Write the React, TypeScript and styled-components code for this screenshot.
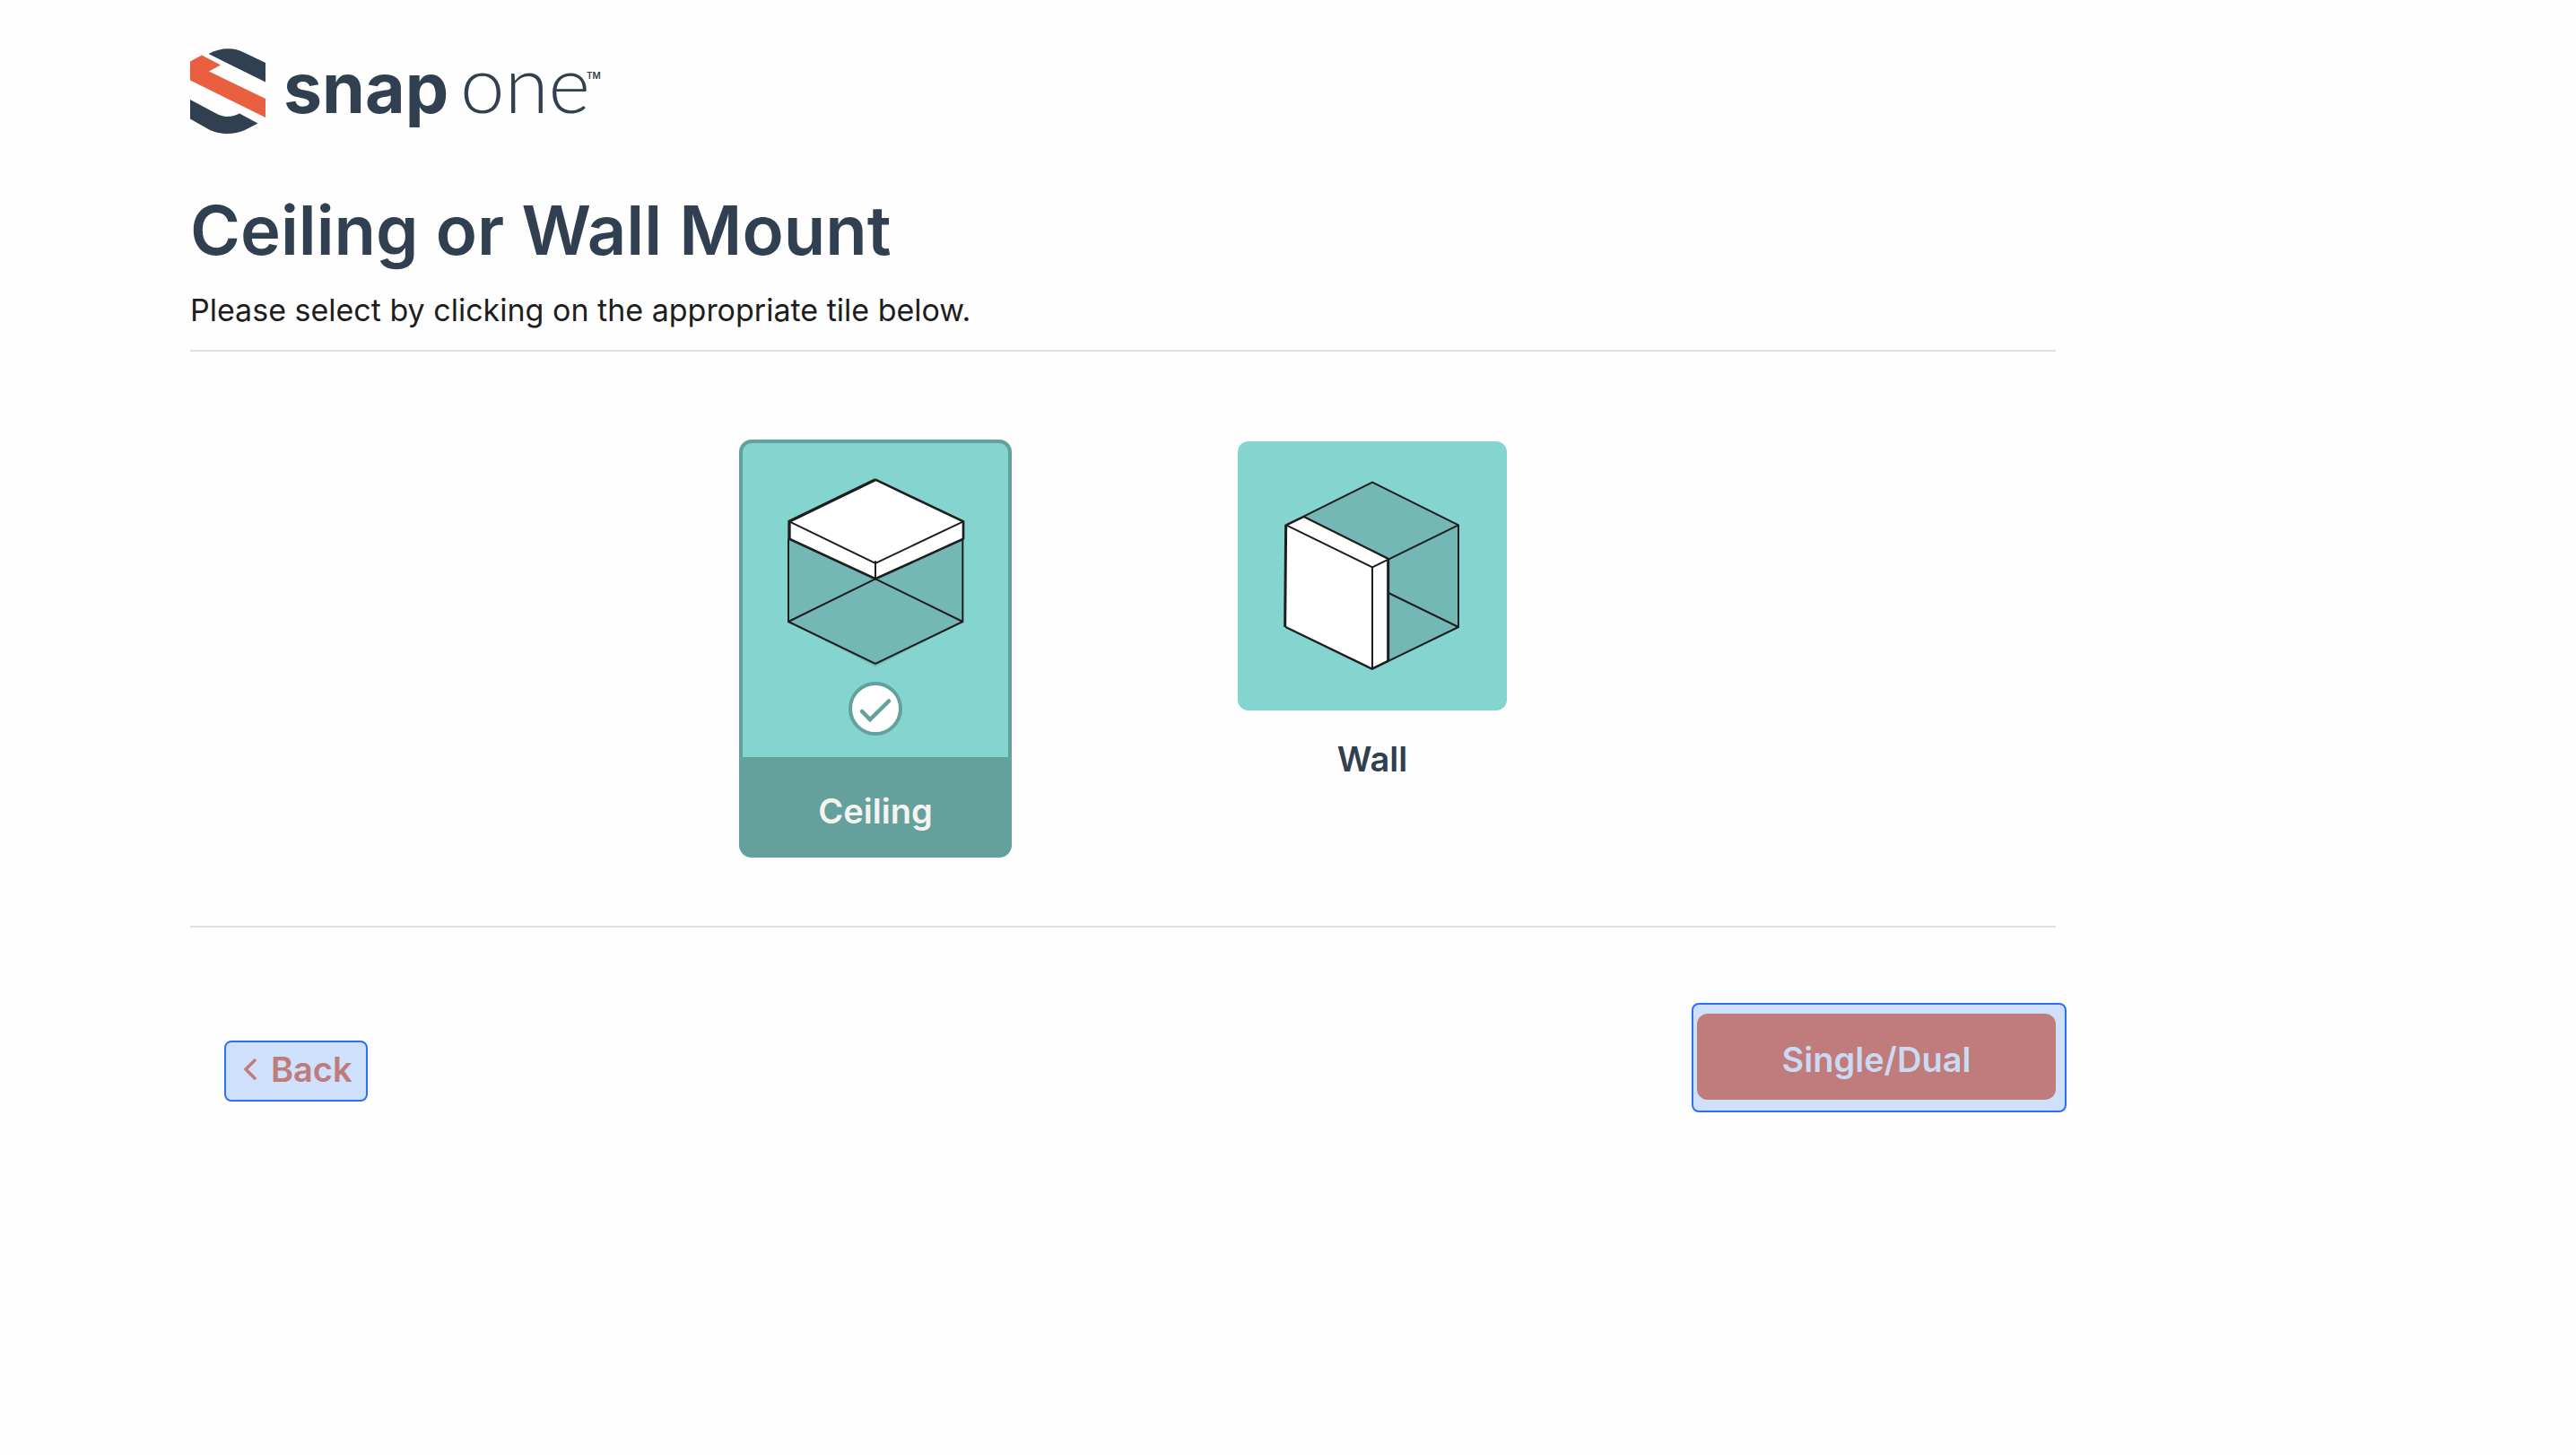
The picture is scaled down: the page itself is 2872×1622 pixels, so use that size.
import React, { useState } from "react";
import styled, { createGlobalStyle, css } from "styled-components";

const navy = "#304050";
const orange = "#e8603f";
const aqua = "#84d4cf";
const teal = "#64a19d";
const ink = "#1e1e20";
const shade = "#74b8b5";
const rose = "#c07b7b";
const highlight = "#cfe0fb";
const highlightEdge = "#2970fa";
const rule = "#dedede";

const GlobalStyle = createGlobalStyle`
  *, *::before, *::after { box-sizing: border-box; }
  body {
    margin: 0;
    background: #fefefe;
    color: ${ink};
    font-family: Inter, "Noto Sans", sans-serif;
  }
  button { font: inherit; border: 0; padding: 0; background: none; cursor: pointer; }
`;

const Page = styled.main`
  max-width: 2292px;
  padding: 54px 0 0 212px;
`;

const Logo = styled.svg`
  display: block;
  width: 460px;
  height: 96px;
  overflow: visible;
`;

const Header = styled.header`
  padding-bottom: 20px;
  border-bottom: 2px solid ${rule};
`;

const Title = styled.h1`
  margin: 64px 0 24px;
  color: ${navy};
  font-size: 76px;
  line-height: 84px;
  font-weight: 600;
`;

const Intro = styled.p`
  margin: 0;
  font-size: 34px;
  line-height: 48px;
`;

const Tiles = styled.section`
  display: flex;
  justify-content: center;
  align-items: flex-start;
  gap: 252px;
  padding: 98px 0 76px;
  border-bottom: 2px solid ${rule};
`;

const Tile = styled.button<{ $selected: boolean }>`
  display: flex;
  flex-direction: column;
  text-align: center;
  color: ${navy};
  font-size: 38px;
  line-height: 48px;
  font-weight: 600;
  ${({ $selected }) =>
    $selected
      ? css`
          border: 4px solid ${teal};
          border-radius: 14px;
          background: ${teal};
          color: #f6f3f0;
        `
      : css`
          margin-top: 2px;
        `}
`;

const TileFace = styled.span<{ $selected: boolean }>`
  display: flex;
  flex-direction: column;
  align-items: center;
  background: ${aqua};
  border-radius: ${({ $selected }) => ($selected ? "10px 10px 0 0" : "12px")};
  padding-bottom: ${({ $selected }) => ($selected ? "24px" : "0")};
`;

const TileLabel = styled.span<{ $selected: boolean }>`
  display: block;
  align-self: stretch;
  padding: ${({ $selected }) => ($selected ? "36px 0 24px" : "30px 0 0")};
`;

const CeilingArt = styled.svg`
  display: block;
  width: 296px;
  height: 256px;
`;

const WallArt = styled.svg`
  display: block;
  width: 300px;
  height: 300px;
`;

const CheckMark = styled.svg`
  display: block;
  width: 60px;
  height: 60px;
  margin-top: 10px;
`;

const Actions = styled.nav`
  display: flex;
  justify-content: space-between;
  align-items: flex-start;
  margin: 84px -12px 0 38px;
  font-size: 38px;
  line-height: 48px;
  font-weight: 600;
`;

const Hotspot = styled.div`
  border: 2px solid ${highlightEdge};
  border-radius: 8px;
  background: ${highlight};
`;

const BackHotspot = styled(Hotspot)`
  margin-top: 42px;
`;

const NextHotspot = styled(Hotspot)`
  padding: 10px 10px 12px 4px;
`;

const BackButton = styled.button`
  display: flex;
  align-items: center;
  gap: 16px;
  width: 156px;
  height: 64px;
  padding: 0 0 4px 20px;
  color: ${rose};
`;

const Chevron = styled.svg`
  width: 14px;
  height: 24px;
`;

const NextButton = styled.button`
  display: block;
  width: 400px;
  height: 96px;
  padding-top: 6px;
  border-radius: 12px;
  background: ${rose};
  color: #c9daf2;
`;

function SnapOneLogo() {
  return (
    <Logo viewBox="0 0 460 96" role="img" aria-label="snap one">
      <path
        fill={navy}
        d="M20.500 6C34 -1.500 49 -1.500 60 4.500L84 16V37.500Z"
      />
      <path
        fill={orange}
        d="M0 14.500L13 7.500L34 18.500L21 25.500L84 56V77L0 35.500Z"
      />
      <path
        fill={navy}
        d="M0 57L29 72.500C37 77 46 77 55 72.500L75.500 83.500L61 91C48 96.500 34 96.500 22 91L0 78.500Z"
      />
      <text x="104" y="72" fill={navy} fontSize="77" fontWeight="700">
        snap
      </text>
      <text
        x="301"
        y="72"
        fill={navy}
        fontFamily="Lato, sans-serif"
        fontSize="89"
        fontWeight="300"
      >
        one
      </text>
      <text x="442" y="34" fill={navy} fontSize="10" fontWeight="600">
        TM
      </text>
    </Logo>
  );
}

function CeilingCube() {
  return (
    <CeilingArt viewBox="54 42 888 768" aria-hidden="true">
      <path fill={shade} d="M207 360H790V640L498 790L207 640Z" />
      <path fill="#fff" d="M210 304L498 164L792 304V362L498 496L210 362Z" />
      <g fill="none" stroke={ink} strokeWidth="6">
        <path d="M207 362V639L498 780L790 639V362" />
        <path d="M207 639L498 496L790 639" />
        <path d="M210 304L498 444L792 304" />
        <path d="M498 436V496" />
        <path strokeWidth="8" d="M210 362L498 496L792 362" />
        <path strokeWidth="8" d="M498 164L792 304V364" />
        <path strokeWidth="10" d="M210 364V304L498 164" />
      </g>
    </CeilingArt>
  );
}

function WallCube() {
  return (
    <WallArt viewBox="30 36 900 900" aria-hidden="true">
      <path fill={shade} d="M251 288L480 173L768 316V657L534 770V428Z" />
      <path fill="#fff" d="M192 316L251 288L532 428V770L480 797L190 657Z" />
      <g fill="none" stroke={ink} strokeWidth="6">
        <path d="M192 316L480 173L768 316V657L480 797" />
        <path d="M192 316L480 457L768 316" />
        <path d="M480 457V797" />
        <path d="M534 543L768 657" />
        <path strokeWidth="7" d="M192 316L251 288L532 428" />
        <path strokeWidth="9" d="M533 426V770" />
        <path strokeWidth="7" d="M534 770L479 797L190 657" />
        <path strokeWidth="9" d="M191 314L188 657" />
      </g>
    </WallArt>
  );
}

function SelectedMark() {
  return (
    <CheckMark viewBox="0 0 60 60" aria-hidden="true">
      <circle cx="30" cy="30" r="28" fill="#fff" stroke={teal} strokeWidth="4" />
      <path
        d="M15 33L24 42L45 21.500"
        fill="none"
        stroke={teal}
        strokeWidth="4.500"
        strokeLinecap="round"
      />
    </CheckMark>
  );
}

const options = [
  { name: "Ceiling", Art: CeilingCube },
  { name: "Wall", Art: WallCube },
];

export default function App() {
  const [mount, setMount] = useState("Ceiling");
  return (
    <>
      <GlobalStyle />
      <Page>
        <Header>
          <SnapOneLogo />
          <Title>Ceiling or Wall Mount</Title>
          <Intro>Please select by clicking on the appropriate tile below.</Intro>
        </Header>
        <Tiles aria-label="Mount type">
          {options.map(({ name, Art }) => {
            const selected = mount === name;
            return (
              <Tile
                key={name}
                type="button"
                $selected={selected}
                aria-pressed={selected}
                onClick={() => setMount(name)}
              >
                <TileFace $selected={selected}>
                  <Art />
                  {selected && <SelectedMark />}
                </TileFace>
                <TileLabel $selected={selected}>{name}</TileLabel>
              </Tile>
            );
          })}
        </Tiles>
        <Actions aria-label="Steps">
          <BackHotspot>
            <BackButton type="button">
              <Chevron viewBox="0 0 14 24" aria-hidden="true">
                <path
                  d="M12 2L2 12L12 22"
                  fill="none"
                  stroke="currentColor"
                  strokeWidth="3.500"
                  strokeLinecap="round"
                />
              </Chevron>
              Back
            </BackButton>
          </BackHotspot>
          <NextHotspot>
            <NextButton type="button">Single/Dual</NextButton>
          </NextHotspot>
        </Actions>
      </Page>
    </>
  );
}
